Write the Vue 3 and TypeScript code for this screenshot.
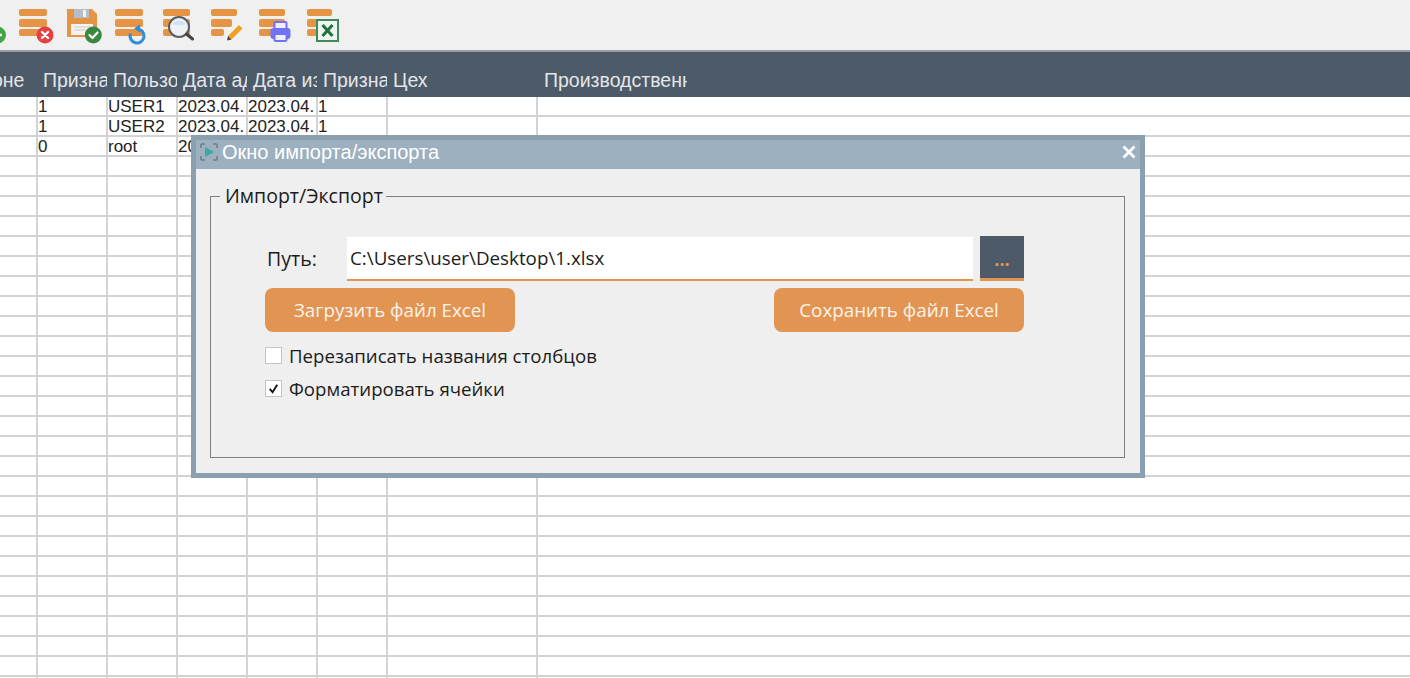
<script setup lang="ts">
import { ref } from 'vue';

const headers = ['оне', 'Призна', 'Пользо', 'Дата ад', 'Дата из', 'Призна', 'Цех', 'Производственн'];

const records = [
  ['', '1', 'USER1', '2023.04.', '2023.04.', '1', '', ''],
  ['', '1', 'USER2', '2023.04.', '2023.04.', '1', '', ''],
  ['', '0', 'root', '20', '', '', '', ''],
];

const rows = [...records, ...Array.from({ length: 27 }, () => ['', '', '', '', '', '', '', ''])];

const path = ref('C:\\Users\\user\\Desktop\\1.xlsx');
const overwriteNames = ref(false);
const formatCells = ref(true);
</script>

<template>
  <div class="page">
    <div class="toolbar">
      <!-- add -->
      <svg class="tool" viewBox="0 0 40 40">
        <g class="bars"><rect x="0" y="4" width="28" height="7" rx="2" /><rect x="0" y="14" width="28" height="8" rx="2" /><rect x="0" y="24" width="28" height="7" rx="2" /></g>
        <circle cx="26.500" cy="30" r="8.500" fill="#3fa548" />
        <path d="M22 30h9M26.500 25.500v9" stroke="#fff" stroke-width="2.500" />
      </svg>
      <!-- delete -->
      <svg class="tool" viewBox="0 0 40 40">
        <g class="bars"><rect x="0" y="4" width="28" height="7" rx="2" /><rect x="0" y="14" width="28" height="8" rx="2" /><rect x="0" y="24" width="28" height="7" rx="2" /></g>
        <circle cx="26" cy="30" r="8.500" fill="#e8403f" />
        <path d="M23 27l6 6M29 27l-6 6" stroke="#fff" stroke-width="2.400" stroke-linecap="round" />
      </svg>
      <!-- save -->
      <svg class="tool" viewBox="0 0 40 40">
        <path d="M0 4h25l5 5v23H0z" fill="#e59445" />
        <rect x="7" y="4" width="15" height="9" fill="#b4bfc9" />
        <rect x="16" y="5" width="3" height="7" fill="#f2f2f2" />
        <rect x="4" y="19" width="22" height="11" fill="#f5f3ef" />
        <path d="M7 22h16M7 25h16" stroke="#c9c9c9" stroke-width="1" />
        <circle cx="26.300" cy="30" r="8.500" fill="#38893f" />
        <path d="M22.500 30l3 3 5-5.500" fill="none" stroke="#fff" stroke-width="2.200" stroke-linecap="round" stroke-linejoin="round" />
      </svg>
      <!-- refresh -->
      <svg class="tool" viewBox="0 0 40 40">
        <g class="bars"><rect x="0" y="4" width="28" height="7" rx="2" /><rect x="0" y="14" width="28" height="8" rx="2" /><rect x="0" y="24" width="28" height="7" rx="2" /></g>
        <path d="M22 24a7 7 0 1 1-6.500 4.500" fill="none" stroke="#2f8de0" stroke-width="3" />
        <path d="M25 19.500v8l-6-4z" fill="#2f8de0" />
      </svg>
      <!-- search -->
      <svg class="tool" viewBox="0 0 40 40">
        <g class="bars"><rect x="0" y="4" width="27" height="7" rx="2" /><rect x="0" y="14" width="27" height="8" rx="2" /><rect x="0" y="24" width="27" height="7" rx="2" /></g>
        <circle cx="16" cy="22" r="10" fill="#eef2f6" stroke="#5b5b5b" stroke-width="2" />
        <path d="M9.500 19a7 5 0 0 1 13 0a9 4 0 0 1-13 0" fill="#cfe2f3" />
        <path d="M23.500 29l6 5" stroke="#444" stroke-width="3" stroke-linecap="round" />
      </svg>
      <!-- edit -->
      <svg class="tool" viewBox="0 0 40 40">
        <g class="bars"><rect x="0" y="4" width="26" height="7" rx="2" /><rect x="0" y="14" width="21" height="8" rx="2" /><rect x="0" y="24" width="13" height="7" rx="2" /></g>
        <path d="M28 20l3.500 3.500-11 11-3.500-3.500z" fill="#f0a01e" />
        <path d="M17 31l3.500 3.500-4.500 1z" fill="#444" />
      </svg>
      <!-- print -->
      <svg class="tool" viewBox="0 0 40 40">
        <g class="bars"><rect x="0" y="4" width="26" height="7" rx="2" /><rect x="0" y="14" width="26" height="8" rx="2" /><rect x="0" y="24" width="26" height="7" rx="2" /></g>
        <rect x="15.500" y="17" width="12" height="7" rx="1" fill="#eef" stroke="#7272f2" stroke-width="2" />
        <rect x="11.500" y="23" width="20" height="11" rx="3" fill="#7272f2" />
        <rect x="15.500" y="29" width="12" height="7" rx="1" fill="#eef" stroke="#7272f2" stroke-width="2" />
      </svg>
      <!-- excel -->
      <svg class="tool" viewBox="0 0 40 40">
        <g class="bars"><rect x="0" y="4" width="25" height="7" rx="2" /><rect x="0" y="14" width="14" height="8" rx="2" /><rect x="0" y="24" width="14" height="7" rx="2" /></g>
        <rect x="10" y="15" width="21" height="21" fill="#eef4ef" stroke="#3d8a5c" stroke-width="2" />
        <path d="M15.500 20l10 11M25.500 20l-10 11" stroke="#22703f" stroke-width="3" />
      </svg>
    </div>

    <div class="table-head">
      <div v-for="(h, i) in headers" :key="i" class="head-cell">{{ h }}</div>
    </div>

    <div class="table-body">
      <div v-for="(row, r) in rows" :key="r" class="table-row">
        <div v-for="(val, c) in row" :key="c" class="cell">{{ val }}</div>
      </div>
    </div>

    <section class="dialog">
      <header class="dialog-title">
        <svg class="title-icon" viewBox="0 0 18 18">
          <path d="M1 5V2q0-1 1-1h3M13 1h3q1 0 1 1v3M17 13v3q0 1-1 1h-3M5 17H2q-1 0-1-1v-3" fill="none" stroke="#707d88" stroke-width="1.600" />
          <path d="M5 4l9 5-9 5z" fill="#3aa9a5" />
        </svg>
        <span class="title-text">Окно импорта/экспорта</span>
        <svg class="close" viewBox="0 0 14 14">
          <path d="M1.500 1.500l11 11M12.500 1.500l-11 11" stroke="#fff" stroke-width="2.800" />
        </svg>
      </header>

      <div class="dialog-body">
        <fieldset class="group">
          <legend>Импорт/Экспорт</legend>

          <div class="path-row">
            <span class="path-label">Путь:</span>
            <div class="path-field">{{ path }}</div>
            <button class="browse">...</button>
          </div>

          <div class="actions">
            <button class="action">Загрузить файл Excel</button>
            <button class="action">Сохранить файл Excel</button>
          </div>

          <label class="check first" @click="overwriteNames = !overwriteNames">
            <span class="box">
              <svg v-if="overwriteNames" viewBox="0 0 16 16"><path d="M4 8.500l3 3.500 5-8" fill="none" stroke="#111" stroke-width="2" /></svg>
            </span>
            Перезаписать названия столбцов
          </label>
          <label class="check" @click="formatCells = !formatCells">
            <span class="box">
              <svg v-if="formatCells" viewBox="0 0 16 16"><path d="M4 8.500l3 3.500 5-8" fill="none" stroke="#111" stroke-width="2" /></svg>
            </span>
            Форматировать ячейки
          </label>
        </fieldset>
      </div>
    </section>
  </div>
</template>

<style scoped>
.page {
  position: relative;
  width: 1410px;
  height: 678px;
  overflow: hidden;
  background: #fff;
  font-family: "Liberation Sans", Arial, sans-serif;
}

/* ── Toolbar ── */
.toolbar {
  display: flex;
  gap: 8px;
  box-sizing: border-box;
  height: 50px;
  padding-top: 5px;
  margin-left: -29px;
  background: #f0f0f0;
}

.tool {
  width: 40px;
  height: 40px;
  flex-shrink: 0;
  overflow: visible;
  filter: blur(0.4px);
}

.bars {
  fill: #e59445;
}

/* ── Table ── */
.table-head {
  display: flex;
  box-sizing: border-box;
  height: 47px;
  border-top: 2px solid #9a9fa6;
  background: #4d5a68;
}

.head-cell {
  flex: 0 0 70px;
  box-sizing: border-box;
  padding: 16px 0 0 6px;
  overflow: hidden;
  white-space: nowrap;
  font-size: 19.500px;
  line-height: 24px;
  color: #e3e6ea;
}

.head-cell:nth-child(1) {
  flex-basis: 37px;
  padding-left: 0;
  text-indent: -8px;
}

.head-cell:nth-child(7) {
  flex-basis: 150px;
}

.head-cell:nth-child(8) {
  flex-basis: 150px;
  padding-left: 7px;
}

.table-row {
  display: flex;
  height: 20px;
}

.cell {
  flex: 0 0 70px;
  box-sizing: border-box;
  overflow: hidden;
  white-space: nowrap;
  border-right: 2px solid #d3d3d3;
  border-bottom: 2px solid #d3d3d3;
  font-size: 17px;
  line-height: 19px;
  color: #222;
}

.cell:nth-child(1) {
  flex-basis: 38px;
}

.cell:nth-child(7) {
  flex-basis: 150px;
}

.cell:nth-child(8) {
  flex: 1;
  border-right: none;
}

/* ── Dialog ── */
.dialog {
  position: absolute;
  left: 191px;
  top: 135px;
  display: flex;
  flex-direction: column;
  box-sizing: border-box;
  width: 954px;
  height: 343px;
  border: 5px solid #8a9fb0;
  background: #efefef;
}

.dialog-title {
  display: flex;
  align-items: center;
  box-sizing: border-box;
  height: 29px;
  padding: 0 4px 5px 4px;
  background: #9db0bf;
}

.title-icon {
  width: 18px;
  height: 18px;
  margin-right: 4px;
}

.title-text {
  flex: 1;
  font-size: 20px;
  color: #fff;
}

.close {
  width: 14px;
  height: 14px;
}

.dialog-body {
  flex: 1;
  display: flex;
  padding: 14px 15px 15px 14px;
  min-height: 0;
}

.group {
  flex: 1;
  min-width: 0;
  margin: 0;
  padding: 27px 100px 0 54px;
  border: 1px solid #7f7f7f;
  font-family: "Open Sans", "Noto Sans", sans-serif;
  color: #1c1c1c;
}

.group legend {
  margin-left: -45px;
  padding: 0 3px 0 5px;
  font-size: 19.500px;
  line-height: 26px;
}

.path-row {
  display: flex;
  align-items: stretch;
  height: 45px;
}

.path-label {
  flex: 0 0 82px;
  box-sizing: border-box;
  padding-left: 2px;
  font-size: 19.500px;
  line-height: 45px;
}

.path-field {
  flex: 1;
  box-sizing: border-box;
  margin-top: 1px;
  padding-left: 3px;
  background: #fff;
  border-bottom: 2px solid #e29553;
  font-size: 18.800px;
  line-height: 43px;
}

.browse {
  flex: 0 0 44px;
  margin-left: 7px;
  padding: 3px 0 0;
  background: #4d5a68;
  border: none;
  border-bottom: 3px solid #e29553;
  color: #e29553;
  font: 700 18px "Open Sans", sans-serif;
}

.actions {
  display: flex;
  justify-content: space-between;
  margin-top: 7px;
}

.action {
  width: 250px;
  height: 44px;
  background: #e29553;
  border: none;
  border-radius: 8px;
  color: #fbf3ea;
  font: 18.800px "Open Sans", sans-serif;
}

.check {
  display: flex;
  align-items: center;
  gap: 7px;
  height: 33px;
  font-size: 18.650px;
}

.check.first {
  margin-top: 7px;
}

.box {
  width: 17px;
  height: 17px;
  box-sizing: border-box;
  background: #fff;
  border: 1px solid #c4c4c4;
}

.box svg {
  display: block;
  width: 15px;
  height: 15px;
}
</style>

<style>
html,
body {
  margin: 0;
  overflow: hidden;
}
</style>
